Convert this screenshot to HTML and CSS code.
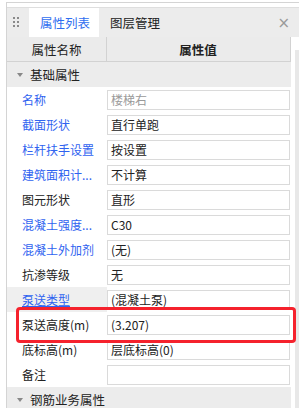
FILE: index.html
```html
<!DOCTYPE html>
<html lang="zh-CN">
<head>
  <meta charset="UTF-8" />
  <title>属性列表</title>
  <link rel="stylesheet" href="styles.css">
</head>
<body>
  <div class="frame">
    <div class="tabs">
      <span class="grip"></span>
      <span class="tab active">属性列表</span>
      <span class="tab">图层管理</span>
      <span class="close">&times;</span>
    </div>
    <div class="body">
      <div class="grid">
        <div class="row head">
          <div class="name">属性名称</div>
          <div class="val">属性值</div>
        </div>
        <div class="row group"><span class="caret"></span>基础属性</div>
        <div class="row"><div class="name link">名称</div><div class="val"><span class="box muted">楼梯右</span></div></div>
        <div class="row"><div class="name link">截面形状</div><div class="val"><span class="box">直行单跑</span></div></div>
        <div class="row"><div class="name link">栏杆扶手设置</div><div class="val"><span class="box">按设置</span></div></div>
        <div class="row"><div class="name link">建筑面积计...</div><div class="val"><span class="box">不计算</span></div></div>
        <div class="row"><div class="name">图元形状</div><div class="val"><span class="box">直形</span></div></div>
        <div class="row"><div class="name link">混凝土强度...</div><div class="val"><span class="box">C30</span></div></div>
        <div class="row"><div class="name link">混凝土外加剂</div><div class="val"><span class="box">(无)</span></div></div>
        <div class="row"><div class="name">抗渗等级</div><div class="val"><span class="box">无</span></div></div>
        <div class="row current"><div class="name link under">泵送类型</div><div class="val"><span class="box">(混凝土泵)</span></div></div>
        <div class="row"><div class="name">泵送高度(m)</div><div class="val"><span class="box">(3.207)</span></div></div>
        <div class="row"><div class="name">底标高(m)</div><div class="val"><span class="box">层底标高(0)</span></div></div>
        <div class="row"><div class="name">备注</div><div class="val"><span class="box"></span></div></div>
        <div class="row group"><span class="caret"></span>钢筋业务属性</div>
      </div>
      <div class="scroll"></div>
    </div>
  </div>
  <div class="mark"></div>
</body>
</html>
```
FILE: styles.css
```css
body {
  margin: 0;
  background: #fff;
  font-family: "Noto Sans CJK SC", "Microsoft YaHei", sans-serif;
  font-size: 12px;
  color: #222;
  overflow: hidden;
  position: relative;
  height: 408px;
}
.frame {
  margin: 2px 0 0 6px;
  border-left: 1px solid #d4d4d4;
  border-top: 1px solid #d4d4d4;
  padding-top: 4px;
}
.tabs {
  display: flex;
  align-items: center;
  height: 29px;
  background: #ececec;
  border-top: 1px solid #dedede;
}
.grip {
  width: 6px;
  height: 11px;
  margin: 0 10px 0 6px;
  background-image: radial-gradient(circle, #8a8a8a 1px, transparent 1.2px);
  background-size: 4px 4px;
  background-position: -1px -1px;
}
.tab {
  height: 100%;
  display: flex;
  align-items: center;
  padding: 0 9px 0 11px;
  font-size: 12.5px;
}
.tab.active {
  background: #fff;
  color: #2f6ef0;
}
.close {
  margin-left: auto;
  margin-right: 9px;
  color: #9a9a9a;
  font-family: "DejaVu Sans", sans-serif;
  font-size: 15px;
}
.body {
  display: flex;
}
.grid {
  width: 285px;
}
.row {
  display: flex;
  height: 25px;
  align-items: center;
}
.name {
  width: 100px;
  box-sizing: border-box;
  padding-left: 15px;
  height: 100%;
  display: flex;
  align-items: center;
  flex-shrink: 0;
}
.val {
  flex: 1;
  height: 100%;
  display: flex;
  align-items: center;
  padding-right: 1px;
}
.head {
  height: 24px;
  background: #ebebeb;
  border-bottom: 1px solid #d2d2d2;
  border-right: 1px solid #d2d2d2;
}
.head .name {
  justify-content: center;
  padding-left: 0;
  border-right: 1px solid #d2d2d2;
  font-size: 12.5px;
}
.head .val {
  justify-content: center;
  font-weight: bold;
  font-size: 12.5px;
}
.group {
  background: #ececec;
  padding-left: 6px;
  font-size: 12.5px;
}
.caret {
  width: 0;
  height: 0;
  border-left: 3px solid transparent;
  border-right: 3px solid transparent;
  border-top: 4px solid #888;
  margin: 0 7px 0 4px;
}
.link {
  color: #2f63f0;
}
.under {
  text-decoration: underline;
}
.current .name {
  background: #efefef;
}
.box {
  display: flex;
  align-items: center;
  height: 20px;
  width: 100%;
  box-sizing: border-box;
  border: 1px solid #dadada;
  padding-left: 3px;
  background: #fff;
}
.muted {
  color: #9a9a9a;
}
.scroll {
  margin-left: 4px;
  margin-top: 13px;
  width: 4px;
  background: #e8e8e8;
}
.mark {
  position: absolute;
  left: 16px;
  top: 307px;
  width: 280px;
  height: 36px;
  box-sizing: border-box;
  border: 3px solid #f5222d;
  border-radius: 4px;
}
```
